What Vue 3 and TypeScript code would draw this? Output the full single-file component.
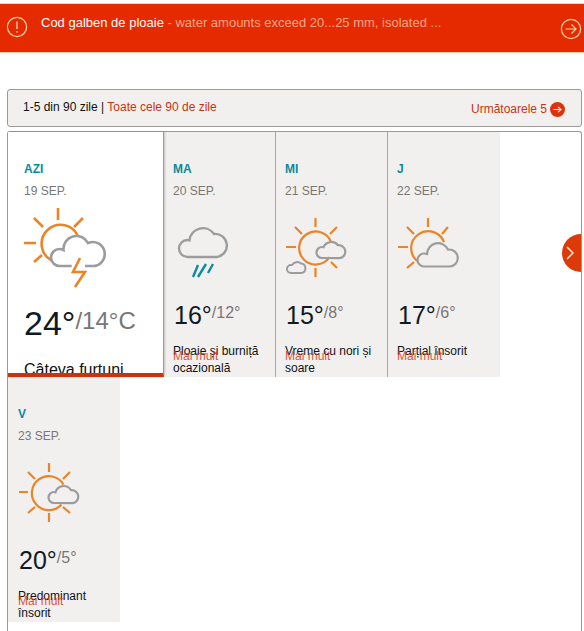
<template>
  <div class="page">
    <div class="alert">
      <svg class="alert-icon" width="26" height="26" viewBox="0 0 26 26" fill="none" stroke="#f8d3ae" stroke-width="1.2">
        <circle cx="13" cy="13" r="9.6" />
        <path d="M13 7.5v7.5" stroke-width="1.4" />
        <path d="M13 17v1.6" stroke-width="1.5" />
      </svg>
      <p class="alert-text"><b>Cod galben de ploaie</b> - water amounts exceed 20...25 mm, isolated ...</p>
      <svg class="alert-go" width="22" height="22" viewBox="0 0 22 22" fill="none" stroke="#f8d3ae" stroke-width="1.2">
        <circle cx="11" cy="11" r="9.6" />
        <path d="M5.5 11h10.5M11.5 6.5 16 11l-4.5 4.5" />
      </svg>
    </div>

    <div class="pager">
      <span class="pager-left">1-5 din 90 zile | <a>Toate cele 90 de zile</a></span>
      <span class="pager-next">
        <a>Următoarele 5</a>
        <svg width="15" height="15" viewBox="0 0 15 15" fill="none">
          <circle cx="7.5" cy="7.5" r="7.5" fill="#d9340a" />
          <path d="M3.5 7.5h7.5M8 4.8l3 2.7-3 2.7" stroke="#fff" stroke-width="1.1" />
        </svg>
      </span>
    </div>

    <div class="panel">
      <div
        v-for="day in days"
        :key="day.name"
        class="day"
        :class="{ today: day.today }"
      >
        <div class="day-name">{{ day.name }}</div>
        <div class="day-date">{{ day.date }}</div>

        <svg class="icon" width="100" height="84" viewBox="0 0 100 84" fill="none">
          <template v-if="day.icon === 'storm'">
            <g stroke="#ea8426" stroke-width="2.6">
              <path d="M34 3v12M0 38h12M10 13l9 9M59 13l-9 9M10 57l8-7" />
              <path d="M27.7 55.5A19 19 0 1 1 53.5 30" />
              <path d="M56 53 49 67H61L51 82" />
            </g>
            <path d="M47.7 61H35.5A8.5 8.5 0 0 1 35.5 44Q37.5 44 39.5 45A13 13 0 0 1 64 38A12 12 0 1 1 68 61H61" stroke="#9a9c9e" stroke-width="2.6" />
          </template>
          <template v-else-if="day.icon === 'rain'">
            <path d="M44 52H14.5A8.5 8.5 0 0 1 14.5 35Q15.5 35 16.5 35.3A13.5 13.5 0 0 1 41 29A11.6 11.6 0 0 1 44 52Z" stroke="#9a9c9e" stroke-width="2.4" />
            <path d="M25 60 20 72M33 59 25 72M40 59 35 68" stroke="#0c8e9e" stroke-width="2.4" />
          </template>
          <template v-else-if="day.icon === 'mostly'">
            <g stroke="#ea8426" stroke-width="2.2">
              <path d="M30.5 13v9M30.5 63v9M1 42h10M10 22l7 7M52 22l-7 7M52 63l-6-6" />
              <path d="M46 37A16.5 16.5 0 1 0 44.5 52" />
            </g>
            <path d="M37 53A5.5 5.5 0 0 1 37 42Q38 42 38.5 42.2A8.5 8.5 0 0 1 53 40.2A6.5 6.5 0 1 1 54.5 53.2Z" stroke="#9a9c9e" stroke-width="2.2" />
            <path d="M6 68A4 4 0 0 1 6 60Q6.5 60 7 60A6 6 0 0 1 16 58.5A4.8 4.8 0 0 1 16.5 68Z" stroke="#9a9c9e" stroke-width="2" />
          </template>
          <template v-else-if="day.icon === 'partly'">
            <g stroke="#ea8426" stroke-width="2.2">
              <path d="M31 13v9M1 42h10M10 22l7 7M51 22l-6 7M10 63l7-6" />
              <path d="M20 56A17 17 0 1 1 47 37" />
            </g>
            <path d="M52.5 61.5H27A6.5 6.5 0 0 1 27 48.5Q28 48.5 30 49A11 11 0 0 1 51 44.6A8.5 8.5 0 1 1 52.5 61.5Z" stroke="#9a9c9e" stroke-width="2.2" />
          </template>
          <template v-else>
            <g stroke="#ea8426" stroke-width="2.2">
              <path d="M31 13v9M31 63v9M1 42h9M10 22l7 7M52 22l-7 7M10 63l7-6M52 63l-7-6" />
              <path d="M45.5 34.5A17 17 0 1 0 43.5 54.5" />
            </g>
            <path d="M36 53A5.5 5.5 0 0 1 36 42Q37 42 37.5 42.2A8.5 8.5 0 0 1 53 40.2A6.5 6.5 0 1 1 54.5 53.2Z" stroke="#9a9c9e" stroke-width="2.2" />
          </template>
        </svg>

        <div class="temps">
          <span class="hi">{{ day.hi }}</span><span class="lo">{{ day.lo }}</span>
        </div>
        <div class="desc">{{ day.desc }}</div>
        <a v-if="!day.today" class="more">Mai mult</a>
      </div>
      <button class="next-btn" aria-label="next">
        <svg width="10" height="16" viewBox="0 0 10 16" fill="none" stroke="#f9e2d2" stroke-width="1.5">
          <path d="M2 2l6 6-6 6" />
        </svg>
      </button>
    </div>
  </div>
</template>

<script setup lang="ts">
interface Day {
  name: string;
  date: string;
  hi: string;
  lo: string;
  desc: string;
  icon: 'storm' | 'rain' | 'mostly' | 'partly' | 'sunny';
  today?: boolean;
}

const days: Day[] = [
  { name: 'AZI', date: '19 SEP.', hi: '24°', lo: '/14°C', desc: 'Câteva furtuni', icon: 'storm', today: true },
  { name: 'MA', date: '20 SEP.', hi: '16°', lo: '/12°', desc: 'Ploaie și burniță ocazională', icon: 'rain' },
  { name: 'MI', date: '21 SEP.', hi: '15°', lo: '/8°', desc: 'Vreme cu nori și soare', icon: 'mostly' },
  { name: 'J', date: '22 SEP.', hi: '17°', lo: '/6°', desc: 'Parțial însorit', icon: 'partly' },
  { name: 'V', date: '23 SEP.', hi: '20°', lo: '/5°', desc: 'Predominant însorit', icon: 'sunny' },
];
</script>

<style>
html,
body {
  margin: 0;
  background: #fff;
}
</style>

<style scoped>
.page {
  height: 631px;
  overflow: hidden;
  padding-top: 3px;
  box-sizing: border-box;
  font-family: "Liberation Sans", Arial, sans-serif;
  color: #111;
}

.alert {
  display: flex;
  align-items: flex-start;
  height: 50px;
  box-sizing: border-box;
  padding: 10px 0 0 4px;
  background: #e62a00;
  border-top: 1px solid #f9cfa8;
  border-bottom: 1px solid #f9cfa8;
}

.alert-icon {
  flex: none;
}

.alert-text {
  flex: 1;
  margin: 1px 0 0 11px;
  font-size: 13px;
  line-height: 16px;
  color: #f3a88c;
}

.alert-text b {
  font-weight: normal;
  color: #fff;
}

.alert-go {
  flex: none;
  margin: 4px 2px 0 0;
}

.pager {
  display: flex;
  justify-content: space-between;
  box-sizing: border-box;
  height: 38px;
  margin: 36px 2px 4px 7px;
  padding: 9px 16px 0 15px;
  background: #f2f0ee;
  border: 1px solid #9a9a9a;
  border-radius: 3px;
  font-size: 12px;
  line-height: 16px;
}

.pager a {
  color: #c9340f;
}

.pager-next {
  display: flex;
  align-items: center;
  gap: 3px;
  height: 16px;
  margin-top: 2px;
}

.panel {
  position: relative;
  display: flex;
  flex-wrap: wrap;
  align-items: flex-start;
  align-content: flex-start;
  box-sizing: border-box;
  height: 500px;
  margin: 0 2px 0 7px;
  border: 1px solid #9a9a9a;
  border-bottom: none;
  border-radius: 3px 3px 0 0;
}

.day {
  position: relative;
  box-sizing: border-box;
  width: 112px;
  height: 245px;
  padding: 30px 0 0 9px;
  overflow: hidden;
  background: #f2f0ee;
  border-right: 1px solid #a8a8a8;
}

.day:nth-child(4),
.day:nth-child(5) {
  border-right: none;
}

.day:nth-child(5) {
  padding-left: 10px;
}

.day.today {
  width: 156px;
  padding-left: 16px;
  background: #fff;
  border-right: 1px solid #9a9a9a;
  border-bottom: 4px solid #c9340f;
  box-shadow: 1px 0 2px rgba(0, 0, 0, 0.2);
  z-index: 1;
}

.day-name {
  font-size: 12px;
  line-height: 14px;
  font-weight: bold;
  color: #0b8a9c;
}

.day-date {
  margin-top: 8px;
  font-size: 12px;
  line-height: 14px;
  color: #777;
}

.icon {
  display: block;
  margin: 7px 0 0;
}

.temps {
  margin: 12px 0 0 1px;
  line-height: 28px;
  white-space: nowrap;
}

.today .temps {
  margin: 20px 0 0;
}

.hi {
  font-size: 25px;
  color: #0f1a24;
}

.lo {
  position: relative;
  top: -6px;
  font-size: 16px;
  color: #777;
}

.today .hi {
  font-size: 34px;
}

.today .lo {
  font-size: 24px;
}

.desc {
  margin-top: 10px;
  font-size: 12px;
  line-height: 17px;
  width: 96px;
}

.today .desc {
  width: auto;
  margin-top: 16px;
  font-size: 16px;
  line-height: 20px;
}

.more {
  position: absolute;
  left: 9px;
  top: 217px;
  font-size: 12px;
  line-height: 14px;
  color: #d4381a;
  opacity: 0.85;
}

.day:nth-child(5) .more {
  left: 10px;
}

.next-btn {
  position: absolute;
  top: 102px;
  right: 0;
  width: 19px;
  height: 38px;
  padding: 0 0 0 3px;
  border: none;
  border-radius: 19px 0 0 19px;
  background: #dc3a08;
}

.next-btn svg {
  display: block;
}
</style>
